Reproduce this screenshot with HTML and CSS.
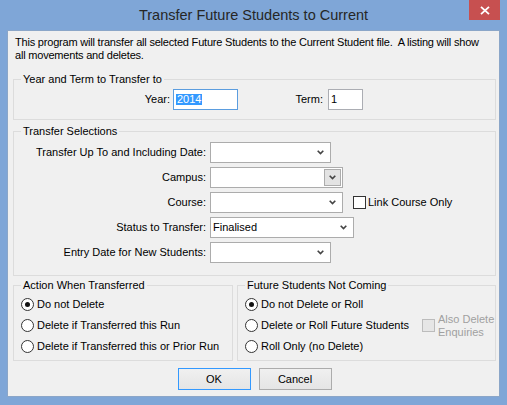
FILE: index.html
```html
<!DOCTYPE html>
<html lang="en">
<head>
<meta charset="utf-8">
<title>Transfer Future Students to Current</title>
<link rel="stylesheet" href="styles.css">
</head>
<body>
<div class="window">
  <div class="titlebar">
    <span class="title">Transfer Future Students to Current</span>
    <div class="close">
      <svg width="10" height="9" viewBox="0 0 10 9"><path d="M1 0.8 L9 8.2 M9 0.8 L1 8.2" stroke="#fff" stroke-width="1.8" fill="none"/></svg>
    </div>
  </div>
  <div class="client">
    <p class="intro"><span class="line">This program will transfer all selected Future Students to the Current Student file.&nbsp; A listing will show</span><span class="line">all movements and deletes.</span></p>

    <fieldset class="group g-year">
      <legend>Year and Term to Transfer to</legend>
      <div class="year-row">
        <span class="lbl lbl-year">Year:</span>
        <div class="textbox tb-year"><span class="sel">2014</span></div>
        <span class="lbl lbl-term">Term:</span>
        <div class="textbox tb-term">1</div>
      </div>
    </fieldset>

    <fieldset class="group g-trans">
      <legend>Transfer Selections</legend>
      <div class="sel-grid">
        <span class="lbl">Transfer Up To and Including Date:</span>
        <div class="cell"><div class="combo w121"><span class="val"></span><svg class="chev" width="7" height="5" viewBox="0 0 7 5"><path d="M0.7 0.7 L3.5 3.6 L6.3 0.7" stroke="#444" stroke-width="1.6" fill="none"/></svg></div></div>

        <span class="lbl">Campus:</span>
        <div class="cell"><div class="combo w133"><span class="val"></span><div class="dropbtn"><svg width="7" height="5" viewBox="0 0 7 5"><path d="M0.7 0.7 L3.5 3.6 L6.3 0.7" stroke="#444" stroke-width="1.6" fill="none"/></svg></div></div></div>

        <span class="lbl">Course:</span>
        <div class="cell"><div class="combo w133"><span class="val"></span><svg class="chev" width="7" height="5" viewBox="0 0 7 5"><path d="M0.7 0.7 L3.5 3.6 L6.3 0.7" stroke="#444" stroke-width="1.6" fill="none"/></svg></div>
          <span class="check"><span class="box"></span>Link Course Only</span></div>

        <span class="lbl">Status to Transfer:</span>
        <div class="cell"><div class="combo w144"><span class="val">Finalised</span><svg class="chev" width="7" height="5" viewBox="0 0 7 5"><path d="M0.7 0.7 L3.5 3.6 L6.3 0.7" stroke="#444" stroke-width="1.6" fill="none"/></svg></div></div>

        <span class="lbl">Entry Date for New Students:</span>
        <div class="cell"><div class="combo w121"><span class="val"></span><svg class="chev" width="7" height="5" viewBox="0 0 7 5"><path d="M0.7 0.7 L3.5 3.6 L6.3 0.7" stroke="#444" stroke-width="1.6" fill="none"/></svg></div></div>
      </div>
    </fieldset>

    <div class="bottom-row">
      <fieldset class="group g-action">
        <legend>Action When Transferred</legend>
        <div class="radios">
          <div class="radio on"><span class="dot"></span>Do not Delete</div>
          <div class="radio"><span class="dot"></span>Delete if Transferred this Run</div>
          <div class="radio"><span class="dot"></span>Delete if Transferred this or Prior Run</div>
        </div>
      </fieldset>
      <fieldset class="group g-future">
        <legend>Future Students Not Coming</legend>
        <div class="future-body">
          <div class="radios future-radios">
            <div class="radio on"><span class="dot"></span>Do not Delete or Roll</div>
            <div class="radio"><span class="dot"></span>Delete or Roll Future Students</div>
            <div class="radio"><span class="dot"></span>Roll Only (no Delete)</div>
          </div>
          <div class="check disabled"><span class="box"></span><span class="check-text">Also Delete<br>Enquiries</span></div>
        </div>
      </fieldset>
    </div>

    <div class="buttons">
      <div class="btn default">OK</div>
      <div class="btn">Cancel</div>
    </div>
  </div>
</div>
</body>
</html>
```

FILE: styles.css
```css
html, body {
  margin: 0;
  padding: 0;
}

body {
  background: #7fa6d7;
  font-family: "Liberation Sans", Arial, sans-serif;
  font-size: 11px;
  line-height: 13px;
  color: #000;
}

.window {
  width: 507px;
  height: 405px;
  display: flex;
  flex-direction: column;
  position: relative;
}

.titlebar {
  height: 30px;
  flex: none;
  position: relative;
  text-align: center;
}

.title {
  display: block;
  padding-top: 1px;
  font-size: 14.5px;
  line-height: 29px;
  color: #262626;
}

.close {
  position: absolute;
  top: 0;
  left: 469px;
  width: 31px;
  height: 20px;
  background: #c75050;
  display: flex;
  align-items: center;
  justify-content: center;
}

.client {
  flex: 1;
  margin: 0 7px 8px;
  border: 1px solid #8ba6c8;
  background: #f0f0f0;
  padding: 5px 3px 0 5px;
}

.intro {
  margin: 0 0 0 2px;
}

.intro .line {
  display: block;
  white-space: nowrap;
  letter-spacing: -0.2px;
}

.group {
  margin: 0;
  padding: 0;
  border: 1px solid #dcdcdc;
  min-inline-size: auto;
}

.group legend {
  margin-left: 7px;
  padding: 0 2px;
  line-height: 13px;
}

.g-year {
  margin-top: 11px;
  padding: 3px 0 9px;
}

.year-row {
  display: flex;
  align-items: center;
  height: 21px;
}

.lbl {
  text-align: right;
  white-space: nowrap;
}

.lbl-year {
  width: 156px;
  margin-right: 3px;
}

.lbl-term {
  width: 85px;
  margin-right: 5px;
}

.textbox {
  box-sizing: border-box;
  height: 21px;
  background: #fff;
  border: 1px solid #abadb3;
  padding: 0 2px;
  line-height: 19px;
}

.tb-year {
  width: 65px;
  border-color: #5b9ddf;
  display: flex;
  align-items: center;
}

.tb-term {
  width: 35px;
}

.sel {
  background: #3399ff;
  color: #fff;
  line-height: 11px;
  height: 11px;
  padding: 0 1px;
}

.g-trans {
  margin-top: 5px;
  padding: 4px 0 12px;
}

.sel-grid {
  display: grid;
  grid-template-columns: 192px auto;
  column-gap: 4px;
  row-gap: 4px;
  align-items: center;
}

.cell {
  display: flex;
  align-items: center;
}

.combo {
  box-sizing: border-box;
  height: 21px;
  background: #fff;
  border: 1px solid #acacac;
  display: flex;
  align-items: center;
  padding-left: 2px;
}

.combo .val {
  flex: 1;
}

.combo .chev {
  margin-right: 6px;
}

.w121 { width: 121px; }
.w133 { width: 133px; }
.w144 { width: 144px; }

.dropbtn {
  box-sizing: border-box;
  width: 17px;
  height: 17px;
  margin-right: 1px;
  background: #e3e3e3;
  border: 1px solid #acacac;
  display: flex;
  align-items: center;
  justify-content: center;
}

.check {
  display: flex;
  align-items: center;
  margin-left: 10px;
}

.check .box {
  box-sizing: border-box;
  width: 13px;
  height: 13px;
  border: 1px solid #333;
  background: #fff;
  margin-right: 2px;
}

.check.disabled {
  margin-left: 0;
  color: #a0a0a0;
}

.check.disabled .box {
  border-color: #bcbcbc;
  background: #e6e6e6;
  margin-right: 3px;
}

.bottom-row {
  display: flex;
  gap: 4px;
  margin-top: 3px;
}

.g-action,
.g-future {
  box-sizing: border-box;
  padding: 2px 0 3px 7px;
}

.g-action legend,
.g-future legend {
  margin-left: 0;
}

.g-action {
  width: 220px;
}

.g-future {
  width: 259px;
}

.radio {
  height: 21px;
  display: flex;
  align-items: center;
  white-space: nowrap;
}

.radio .dot {
  box-sizing: border-box;
  width: 13px;
  height: 13px;
  border: 1px solid #333;
  border-radius: 50%;
  background: #fff;
  margin-right: 3px;
  display: flex;
  align-items: center;
  justify-content: center;
}

.radio.on .dot::after {
  content: "";
  width: 5px;
  height: 5px;
  border-radius: 50%;
  background: #111;
}

.future-body {
  display: flex;
  align-items: center;
}

.future-radios {
  width: 177px;
}

.buttons {
  display: flex;
  justify-content: center;
  gap: 8px;
  margin-top: 7px;
}

.btn {
  box-sizing: border-box;
  width: 73px;
  height: 22px;
  border: 1px solid #acacac;
  background: linear-gradient(#f0f0f0, #e5e5e5);
  display: flex;
  align-items: center;
  justify-content: center;
}

.btn.default {
  border-color: #3399ff;
}
```
